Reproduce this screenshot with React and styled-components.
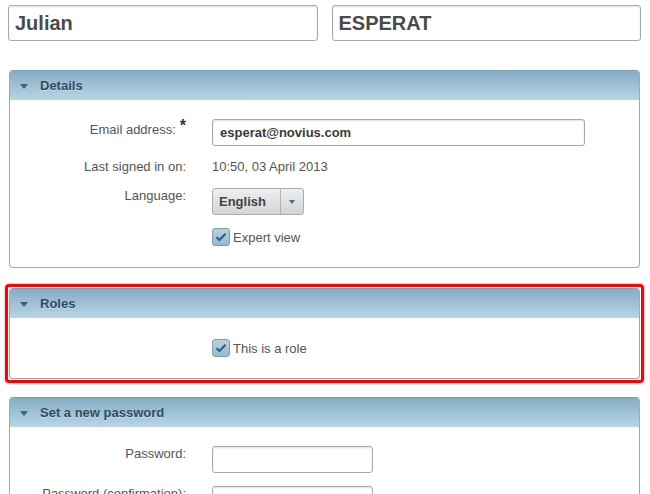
import styled, { createGlobalStyle } from 'styled-components';

const GlobalStyle = createGlobalStyle`
  body {
    margin: 0;
    background: #fff;
    font-family: "Liberation Sans", Arial, sans-serif;
    font-size: 13px;
    color: #555;
  }
`;

const Page = styled.div`
  width: 650px;
  padding: 5px 0 0;
  box-sizing: border-box;
`;

const NameRow = styled.div`
  display: flex;
  gap: 14px;
  padding: 0 9px 0 8px;
  margin-bottom: 29px;
`;

const NameInput = styled.div`
  box-sizing: border-box;
  width: 310px;
  height: 36px;
  border: 1px solid #a9a9a9;
  border-radius: 3px;
  box-shadow: inset 0 1px 2px rgba(0, 0, 0, 0.12);
  padding: 0 6px;
  display: flex;
  align-items: center;
  font-size: 20px;
  font-weight: bold;
  color: #4a4a4a;
`;

const Panel = styled.section`
  box-sizing: border-box;
  width: 631px;
  margin: 0 0 16px 9px;
  border: 1px solid #a8a8a8;
  border-top-color: #7c9fb5;
  border-radius: 4px;
  overflow: hidden;
  background: #fff;
`;

const Highlight = styled.div`
  box-sizing: border-box;
  width: 639px;
  margin: 0 0 14px 5px;
  padding: 1px;
  border: 3px solid #ff0000;
  border-radius: 4px;
  box-shadow: 0 0 2px rgba(255, 0, 0, 0.6);

  & > ${Panel} {
    margin: 0;
  }
`;

const PanelHeader = styled.div`
  height: 29px;
  display: flex;
  align-items: center;
  padding-left: 10px;
  gap: 12px;
  background: linear-gradient(to bottom, #85adc5, #bad5e4);
  border-left: 1px solid #7c9fb5;
  border-right: 1px solid #7c9fb5;
  margin: 0 -1px;
  font-weight: bold;
  color: #2d4c63;
  text-shadow: 0 1px 0 rgba(255, 255, 255, 0.35);
`;

const Triangle = styled.span`
  width: 0;
  height: 0;
  border-left: 4px solid transparent;
  border-right: 4px solid transparent;
  border-top: 5px solid #40627a;
  margin-top: 1px;
`;

const PanelBody = styled.div`
  display: flex;
  flex-direction: column;
  gap: ${({ $gap }) => $gap ?? 10}px;
  padding: ${({ $top }) => $top}px 0 ${({ $bottom }) => $bottom}px;
`;

const Row = styled.div`
  display: flex;
  align-items: flex-start;
  gap: 26px;
  min-height: ${({ $h }) => $h}px;
  margin-top: ${({ $mt }) => $mt ?? 0}px;
`;

const Label = styled.div`
  width: 176px;
  text-align: right;
  padding-top: ${({ $pt }) => $pt ?? 0}px;
  line-height: 16px;
  color: #555;
  white-space: nowrap;
`;

const Required = styled.sup`
  font-size: 16px;
  font-weight: bold;
  color: #333;
  margin-left: 4px;
  line-height: 0;
  vertical-align: -1px;
  position: relative;
  top: -4px;
`;

const Value = styled.div`
  line-height: 16px;
  padding-top: ${({ $pt }) => $pt ?? 0}px;
  color: #555;
`;

const TextInput = styled.div`
  box-sizing: border-box;
  width: ${({ $w }) => $w}px;
  height: ${({ $h }) => $h ?? 27}px;
  border: 1px solid #a9a9a9;
  border-radius: 3px;
  box-shadow: inset 0 1px 2px rgba(0, 0, 0, 0.12);
  padding: 0 7px;
  display: flex;
  align-items: center;
  font-weight: bold;
  color: #3a3a3a;
`;

const Select = styled.div`
  box-sizing: border-box;
  width: 92px;
  height: 27px;
  display: flex;
  border: 1px solid #acacac;
  border-radius: 3px;
  background: linear-gradient(to bottom, #efefef, #d4d4d4);
  font-weight: bold;
  color: #444;
`;

const SelectText = styled.div`
  flex: 1;
  display: flex;
  align-items: center;
  padding-left: 6px;
  border-right: 1px solid #b2b2b2;
`;

const SelectArrow = styled.div`
  width: 22px;
  display: flex;
  align-items: center;
  justify-content: center;

  &::after {
    content: '';
    border-left: 3.5px solid transparent;
    border-right: 3.5px solid transparent;
    border-top: 4px solid #3e6f90;
  }
`;

const CheckRow = styled.label`
  display: flex;
  align-items: center;
  gap: 3px;
  color: #555;
`;

const CheckBox = styled.span`
  box-sizing: border-box;
  width: 18px;
  height: 18px;
  border: 1px solid #7d9cb1;
  border-radius: 3px;
  background: linear-gradient(to bottom, #b7d1e1, #97b9ce);
  display: flex;
  align-items: center;
  justify-content: center;
`;

const Check = () => (
    <CheckBox>
        <svg width="12" height="10" viewBox="0 0 12 10">
            <path d="M1.5 5.2 L4.5 8 L10.5 1.8" fill="none" stroke="#33607e" strokeWidth="2.2" />
        </svg>
    </CheckBox>
);

const Header = ({ children }) => (
    <PanelHeader>
        <Triangle />
        {children}
    </PanelHeader>
);

export default function App() {
    return (
        <Page>
            <GlobalStyle />
            <NameRow>
                <NameInput>Julian</NameInput>
                <NameInput>ESPERAT</NameInput>
            </NameRow>

            <Panel>
                <Header>Details</Header>
                <PanelBody $top={19} $bottom={21} $gap={11}>
                    <Row $h={27}>
                        <Label $pt={3}>Email address:<Required>*</Required></Label>
                        <TextInput $w={373}>esperat@novius.com</TextInput>
                    </Row>
                    <Row $h={20}>
                        <Label $pt={2}>Last signed in on:</Label>
                        <Value $pt={2}>10:50, 03 April 2013</Value>
                    </Row>
                    <Row $h={27}>
                        <Label>Language:</Label>
                        <Select>
                            <SelectText>English</SelectText>
                            <SelectArrow />
                        </Select>
                    </Row>
                    <Row $mt={2}>
                        <Label />
                        <CheckRow><Check />Expert view</CheckRow>
                    </Row>
                </PanelBody>
            </Panel>

            <Highlight>
                <Panel>
                    <Header>Roles</Header>
                    <PanelBody $top={21} $bottom={21}>
                        <Row>
                            <Label />
                            <CheckRow><Check />This is a role</CheckRow>
                        </Row>
                    </PanelBody>
                </Panel>
            </Highlight>

            <Panel>
                <Header>Set a new password</Header>
                <PanelBody $top={19} $bottom={20} $gap={13}>
                    <Row $h={27}>
                        <Label $pt={0}>Password:</Label>
                        <TextInput $w={161} />
                    </Row>
                    <Row $h={27}>
                        <Label $pt={0}>Password (confirmation):</Label>
                        <TextInput $w={161} />
                    </Row>
                </PanelBody>
            </Panel>
        </Page>
    );
}
